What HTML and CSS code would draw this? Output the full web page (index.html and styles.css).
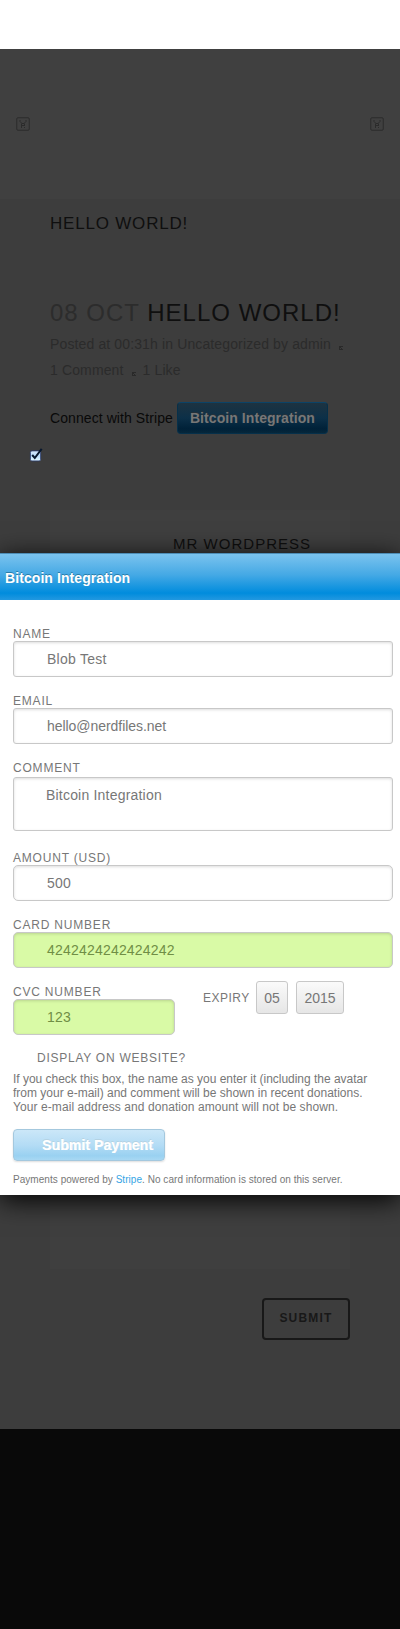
FILE: index.html
```html
<!DOCTYPE html>
<html lang="en">
<head>
<meta charset="utf-8">
<title>Hello world!</title>
<link rel="stylesheet" href="styles.css">
</head>
<body>
<div class="page">
  <header class="site-header">
    <svg class="nav-icon" viewBox="0 0 14 14"><rect x=".75" y=".75" width="12.5" height="12.5" rx="1"/><path d="M4 3v1.500l2 2M10 3v1.500l-2 2M5.500 6.500h3M5 8.500h4M5.500 7v4M8.500 7v1.500M8.500 10v1"/></svg>
    <svg class="nav-icon" viewBox="0 0 14 14"><rect x=".75" y=".75" width="12.5" height="12.5" rx="1"/><path d="M4 3v1.500l2 2M10 3v1.500l-2 2M5.500 6.500h3M5 8.500h4M5.500 7v4M8.500 7v1.500M8.500 10v1"/></svg>
  </header>
  <main class="content">
    <h1 class="page-title">HELLO WORLD!</h1>
    <h2 class="post-title"><span class="date">08 OCT</span> HELLO WORLD!</h2>
    <div class="meta">
      <div class="meta-row"><span class="posted">Posted at 00:31h in Uncategorized by admin</span><svg class="dot" viewBox="0 0 4 4"><path d="M0 .5h4M.5 0v4M0 3.5h4M1 1l3 3"/></svg></div>
      <div class="meta-row"><span>1 Comment</span><svg class="dot" viewBox="0 0 4 4"><path d="M0 .5h4M.5 0v4M0 3.5h4M1 1l3 3"/></svg><span class="like">1 Like</span></div>
    </div>
    <div class="connect"><span>Connect with Stripe</span><button class="blue-button">Bitcoin Integration</button></div>
    <svg class="check" viewBox="0 0 14 14"><defs><linearGradient id="c" x2="0" y2="1"><stop stop-color="#d8e9fb"/><stop offset=".5" stop-color="#b9dcfb"/><stop offset="1" stop-color="#e5faff"/></linearGradient></defs><rect x="1.4" y="2.9" width="10.2" height="10" rx="1.5" fill="url(#c)" stroke="#283b70" stroke-width=".8"/><path d="M3.2 7l2.600 3L12.700 .8" fill="none" stroke="#08182e" stroke-width="2"/></svg>
    <section class="comments"><span>MR WORDPRESS</span></section>
    <button class="submit">SUBMIT</button>
  </main>
  <footer class="site-footer"></footer>
  <div class="modal">
    <div class="modal-title">Bitcoin Integration</div>
    <form class="form">
      <label class="field"><span class="label">NAME</span><span class="input name">Blob Test</span></label>
      <label class="field"><span class="label">EMAIL</span><span class="input email">hello@nerdfiles.net</span></label>
      <label class="field comment"><span class="label">COMMENT</span><span class="input area">Bitcoin Integration</span></label>
      <label class="field"><span class="label">AMOUNT (USD)</span><span class="input round">500</span></label>
      <label class="field"><span class="label">CARD NUMBER</span><span class="input round valid">4242424242424242</span></label>
      <div class="split">
        <label class="field cvc"><span class="label">CVC NUMBER</span><span class="input round valid">123</span></label>
        <div class="expiry"><span class="label expiry-label">EXPIRY</span><span class="select month">05</span><span class="select year">2015</span></div>
      </div>
      <div class="display">DISPLAY ON WEBSITE?</div>
      <p class="help"><span class="help-first">If you check this box, the name as you enter it (including the avatar</span><span>from your e-mail) and comment will be shown in recent donations.</span><span class="help-last">Your e-mail address and donation amount will not be shown.</span></p>
      <button type="button" class="blue-button pay">Submit Payment</button>
      <p class="note">Payments powered by <a class="link">Stripe</a>. No card information is stored on this server.</p>
    </form>
  </div>
</div>
</body>
</html>
```
FILE: styles.css
```css
* { box-sizing: border-box; }
body { margin: 0; background: #fff; font: 14px/18px "Liberation Sans", Arial, sans-serif; }
h1, h2, p { margin: 0; font-weight: normal; }
button { font-family: inherit; padding: 0; }
.page { position: relative; height: 1629px; padding-top: 49px; overflow: hidden; white-space: nowrap; }
.site-header { height: 150px; background: #404040; display: flex; justify-content: space-between; padding: 68px 16px 0; }
.nav-icon { width: 14px; height: 14px; fill: none; stroke: #2b2b2b; stroke-width: 1; }
.content { height: 1230px; padding: 15px 50px 0; background: #3d3d3d; color: #0f0f0f; }
.page-title { font-size: 17px; line-height: 20px; letter-spacing: .8px; }
.post-title { margin-top: 65px; font-size: 24px; line-height: 28px; letter-spacing: 1px; }
.date { color: #2c2c2c; }
.meta { color: #2b2b2b; margin-top: 4px; }
.meta-row { height: 26px; line-height: 26px; display: flex; letter-spacing: .13px; }
.dot { width: 4px; height: 4px; margin: 15px 0 0 8px; fill: none; stroke: #292929; }
.like { margin-left: 7px; }
.connect { margin-top: 19px; height: 32px; display: flex; align-items: center; gap: 4px; color: #090909; letter-spacing: .08px; }
.blue-button { width: 151px; height: 32px; border: 1px solid #06304a; border-top-color: #0b4367; border-radius: 4px; background: linear-gradient(#1d3341, #0c3048 50%, #002138 86%, #06273b); color: #777; font-weight: bold; font-size: 14px; letter-spacing: .07px; text-shadow: 0 -1px #24313a; }
.check { display: block; width: 14px; height: 14px; margin: 14px 0 0 -21px; }
.comments { height: 759px; margin-top: 48px; padding: 25px 0 0 123px; background: #3f3f3f; font-size: 15px; letter-spacing: 1.02px; }
.submit { display: block; width: 88px; height: 42px; margin: 29px 0 0 auto; background: none; border: 2px solid #181818; border-radius: 4px; color: #181818; font-size: 12px; font-weight: bold; letter-spacing: 1.2px; padding-bottom: 3px; }
.site-footer { height: 200px; background: #090909; }
.modal { position: absolute; top: 553px; left: 0; width: 400px; height: 642px; background: #fff; color: #777; box-shadow: 0 5px 25px #000; }
.modal-title { height: 47px; padding: 0 5px; line-height: 48px; letter-spacing: .08px; color: #fff; font-weight: bold; border-top: 1px solid #4d8db6; background: linear-gradient(#7bc3ee, #45a9e5 45%, #008cdd 85%, #2298e0); text-shadow: 0 -1px #287ca9; }
.form { padding: 26px 7px 0 13px; }
.field { display: block; margin-bottom: 16px; }
.label { display: block; height: 15px; line-height: 16px; font-size: 12px; letter-spacing: .8px; }
.input { display: block; height: 36px; padding-left: 33px; line-height: 34px; border: 1px solid #c8c8c8; border-radius: 3px; box-shadow: inset 0 1px 3px #ddd; background: #fff; }
.name { letter-spacing: .25px; }
.email { letter-spacing: -.05px; }
.round { border-radius: 5px; letter-spacing: .2px; }
.area { height: 54px; margin-top: 2px; padding-left: 32px; letter-spacing: .2px; }
.comment { margin-bottom: 19px; }
.valid { background: #d9faa6; color: #708e45; box-shadow: inset 0 1px 3px #b8d48e; }
.split { display: flex; }
.cvc { width: 162px; margin-bottom: 13px; }
.expiry { display: flex; height: 33px; margin: -3px 0 0 28px; align-items: center; }
.expiry-label { width: 47px; letter-spacing: .5px; }
.select { height: 33px; line-height: 32px; text-align: center; border: 1px solid #c8c8c8; border-radius: 3px; background: linear-gradient(#fafafa, #e6e6e6); }
.month { width: 32px; margin-left: 6px; }
.year { width: 48px; margin-left: 8px; }
.display { padding-left: 24px; height: 20px; line-height: 20px; font-size: 12px; letter-spacing: .74px; }
.help { font-size: 12px; line-height: 14px; margin-top: 4px; }
.help span { display: block; }
.help .help-first { letter-spacing: -.02px; }
.help .help-last { letter-spacing: .08px; }
.pay { display: block; width: 152px; margin-top: 15px; padding-left: 17px; letter-spacing: .08px; border-color: #a4c8de; background: linear-gradient(#cbe7f8, #b4dcf5 50%, #99d1f1 86%, #a8d8f3); color: #fff; text-shadow: 0 -1px #b4d2e3, .5px 0 #fff; box-shadow: 0 1px 2px #ddd; }
.note { margin-top: 11px; font-size: 10px; line-height: 16px; letter-spacing: .045px; }
.link { color: #36a5e5; }
```
